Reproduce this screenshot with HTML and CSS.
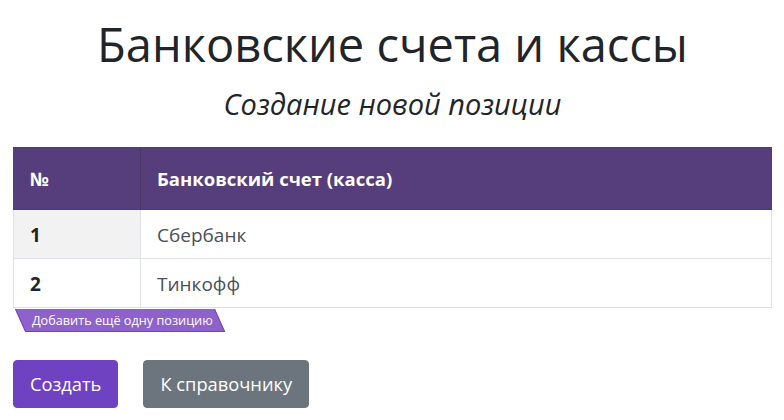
FILE: index.html
```html
<!DOCTYPE html>
<html lang="ru">
<head>
<meta charset="utf-8">
<link rel="stylesheet" href="styles.css">
</head>
<body>
<div class="page">
  <h1 class="title">Банковские счета и кассы</h1>
  <h3 class="subtitle">Создание новой позиции</h3>
  <table class="grid">
    <thead>
      <tr><th class="col-num">№</th><th>Банковский счет (касса)</th></tr>
    </thead>
    <tbody>
      <tr><td class="num active">1</td><td class="name">Сбербанк</td></tr>
      <tr><td class="num">2</td><td class="name">Тинкофф</td></tr>
    </tbody>
  </table>
  <div class="tab-row"><span class="add-tab"><span class="add-text">Добавить ещё одну позицию</span></span></div>
  <div class="actions">
    <button class="btn btn-primary">Создать</button>
    <button class="btn btn-secondary">К справочнику</button>
  </div>
</div>
</body>
</html>
```
FILE: styles.css
```css
* { box-sizing: border-box; }
body {
  margin: 0;
  font-family: "Open Sans", "Noto Sans", sans-serif;
  color: #212529;
  background: #fff;
}
.page {
  padding: 0 12px 0 13px;
}
.title {
  margin: 0;
  padding-top: 16px;
  text-align: center;
  font-size: 47px;
  font-weight: 400;
  line-height: 56px;
}
.subtitle {
  margin: 14px 0 0;
  text-align: center;
  font-size: 29px;
  font-style: italic;
  font-weight: 400;
  line-height: 36px;
}
.grid {
  margin-top: 25px;
  width: 100%;
  border-collapse: collapse;
}
.grid th {
  background: #563d7c;
  color: #fff;
  text-align: left;
  font-weight: 700;
  font-size: 18.5px;
  padding: 19px 16px 18px;
  line-height: 24px;
  border: 1px solid #563d7c;
  border-bottom: 1px solid #454545;
}
.grid th.col-num {
  width: 127px;
  border-right: 1px solid #4a3a62;
}
.grid td {
  padding: 13px 16px 11px;
  line-height: 24px;
  font-size: 19px;
  border: 1px solid #dee2e6;
}
.grid td.num { font-weight: 700; color: #212529; }
.grid td.active { background: #f2f2f2; }
.grid td.name { color: #495057; }
.tab-row {
  height: 24px;
}
.add-tab {
  display: inline-block;
  height: 23px;
  width: 200px;
  background: #8e62cc;
  border: 1px solid #6f42c1;
  border-top: none;
  transform: skewX(24deg);
  transform-origin: top left;
  margin-left: 2px;
}
.add-text {
  display: block;
  transform: skewX(-24deg);
  color: #fff;
  font-size: 12.7px;
  line-height: 22px;
  padding-left: 11px;
  white-space: nowrap;
}
.actions {
  margin-top: 28px;
  display: flex;
  gap: 25px;
}
.btn {
  font-family: inherit;
  font-size: 18.3px;
  line-height: 30px;
  padding: 8px 16px;
  border: 1px solid transparent;
  border-radius: 4px;
  color: #fff;
}
.btn-primary { background: #6f42c1; border-color: #6f42c1; }
.btn-secondary { background: #6c757d; border-color: #6c757d; }
```
